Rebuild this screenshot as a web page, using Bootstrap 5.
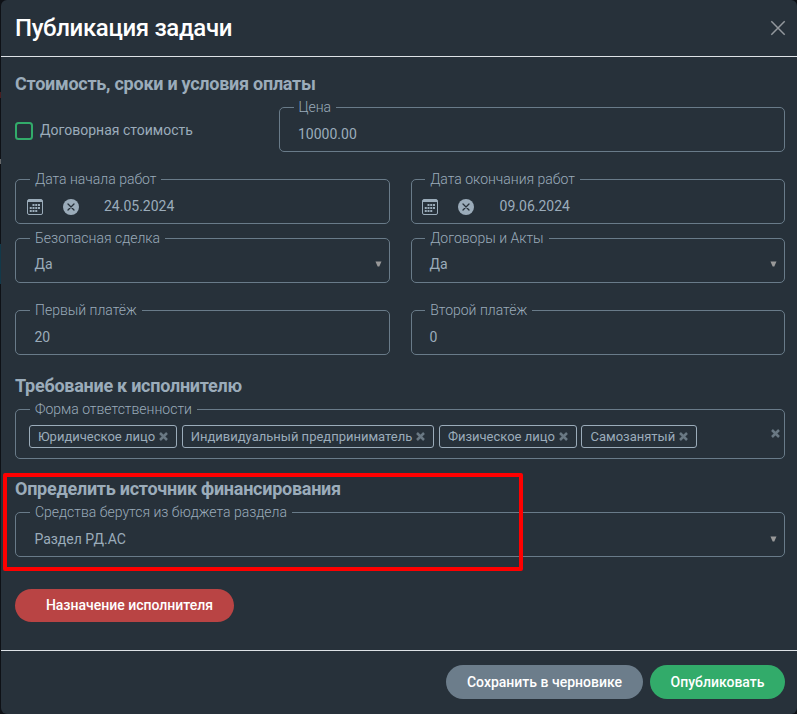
<!DOCTYPE html>
<html lang="ru">
<head>
<meta charset="utf-8">
<meta name="viewport" content="width=device-width, initial-scale=1">
<title>Публикация задачи</title>
<link href="https://cdn.jsdelivr.net/npm/bootstrap@5.3.0/dist/css/bootstrap.min.css" rel="stylesheet">
<style>
body{height:714px;overflow:hidden;font-family:Roboto,"Liberation Sans",sans-serif;font-size:14px;line-height:20px;color:#9bacba;
 background:linear-gradient(#0e1116 92px,#4a1d20 92px 98px,#0e1116 98px 159px,#66686a 159px 164px,#0e1116 164px 244px,#12394a 244px 284px,#0e1116 284px)}
.task-dialog{height:714px;margin-left:1px;width:796px;background:#27313a;border:0;border-radius:6px;color:inherit}
.task-dialog .modal-header{height:57px;padding:0 11px 0 14px;border-bottom:1px solid #dee2e6;border-radius:0}
.task-dialog .modal-title{font-size:24px;line-height:30px;font-weight:500;letter-spacing:-.36px;color:#fff}
.task-dialog .modal-body{padding:16px 12px 0 14px}
.task-dialog .modal-footer{height:64px;padding:0 12px 2px;border-top:1px solid #dee2e6;gap:7px}
.task-dialog .modal-footer>*{margin:0}
.close-btn{width:16px;height:16px;line-height:0;color:#93989d}
.sect{font-size:18px;line-height:22px;font-weight:700;letter-spacing:-.26px;margin:0}
.sect-req{margin:20px 0 12px}
.sect-fin{margin:19px 0 12px}
.field{height:45px;border:1px solid #697b89;border-radius:5px;min-width:0;padding-right:7px}
.field-chips{height:50px;padding-right:4px}
.field-label{align-self:flex-start;height:20px;margin:-11px 0 0 14px;padding:0 5px;background:#27313a;font-weight:300;white-space:nowrap}
.field-value{padding:7px 0 0 18.400px}
.field-price .field-value{padding-left:18px}
.field-price .field-label{margin-left:13.500px}
.two-col{display:grid;grid-template-columns:375px 374.400px;column-gap:20.600px}
.two-col>:last-child .field-label{margin-left:13.600px}
.two-col>:last-child .field-value{padding-left:18px}
.gap-lg{margin-top:27px}
.gap-sm{margin-top:14px}
.gap-sm .field-value{padding-top:6px}
.price-row{display:grid;grid-template-columns:264px 1fr;margin-top:12px}
.check-row{gap:7px;padding-top:1px}
.check{width:18px;height:18px;margin:2px 0 0;border:2px solid #32ab6a;border-radius:4px;background:transparent}
.arrow{width:7px;height:6px;margin-top:6px}
.dates{padding:7px 0 0 11px}
.date-ico{display:block;width:16px;height:16px;margin-top:1px}
.date-ico+.date-ico{margin:1px 25px 0 20px}
.two-col>:last-child .dates{padding-left:10px}
.two-col>:last-child .date-ico+.date-ico{margin-right:26px}
.chips{gap:4.600px;padding:6px 0 0 13px}
.chip{height:23px;border:1px solid #9bacba;border-radius:3px;padding:0 8px;font-size:13px;line-height:21px;gap:4px;white-space:nowrap}
.chip:nth-child(4){padding-right:7.500px}
.btn-task{display:flex;align-items:center;justify-content:center;border:0;border-radius:17px;padding:0;font-size:14px;font-weight:500;color:#fff}
.btn-assign{width:219px;height:33px;margin-top:32px;padding-left:10px;background:#b94444}
.btn-draft{width:197px;height:34px;padding-top:2px;background:#6c7d8b}
.btn-publish{width:135px;height:34px;padding-top:2px;background:#32ab6a}
.highlight{position:absolute;left:2px;top:473px;width:520px;height:98px;border:4px solid #f00;border-radius:2px;pointer-events:none}
</style>
<script src="https://cdn.jsdelivr.net/npm/bootstrap@5.3.0/dist/js/bootstrap.bundle.min.js"></script>
</head>
<body>
<svg class="d-none">
 <symbol id="cal" viewBox="0 0 16 16"><path fill="none" stroke="#9bacba" d="M.5 2A1.500 1.500 0 0 1 2 .5h12A1.500 1.500 0 0 1 15.500 2v12a1.500 1.500 0 0 1-1.500 1.500H2A1.500 1.500 0 0 1 .5 14z"/><path fill="#9bacba" d="M1 1h14v2H1z"/><path stroke="#9bacba" stroke-width="2" stroke-dasharray="2 .75" d="M5.500 6h8M2.750 9h10.750M2.750 12h7.500"/></symbol>
 <symbol id="clear" viewBox="0 0 16 16"><circle cx="8" cy="8" r="8" fill="#9bacba"/><path stroke="#27313a" stroke-width="1.300" stroke-linecap="round" d="m5 5 6 6m0-6-6 6"/></symbol>
 <symbol id="tri" viewBox="0 0 7 6"><path fill="#999" d="M.5.5h6l-2.200 5H2.700z"/></symbol>
 <symbol id="cross" viewBox="0 0 9 9"><path stroke="#697883" stroke-width="2.500" d="m1 1 7 7m0-7-7 7"/></symbol>
</svg>
<div class="task-dialog modal-content position-relative">
 <div class="modal-header d-flex align-items-center justify-content-between">
  <h1 class="modal-title">Публикация задачи</h1>
  <button class="close-btn btn p-0 border-0" aria-label="Закрыть"><svg width="16" height="16" viewBox="0 0 16 16"><path stroke="currentColor" stroke-width="1.500" d="m1.300 1.300 13.400 13.400m0-13.400L1.300 14.700"/></svg></button>
 </div>
 <div class="modal-body flex-grow-1">
  <h2 class="sect">Стоимость, сроки и условия оплаты</h2>
  <div class="price-row">
   <label class="check-row d-flex align-items-center"><input type="checkbox" class="check form-check-input"><span>Договорная стоимость</span></label>
   <div class="field field-price d-flex flex-column"><span class="field-label">Цена</span><span class="field-value">10000.00</span></div>
  </div>
  <div class="two-col gap-lg">
   <div class="field d-flex flex-column"><span class="field-label">Дата начала работ</span>
    <div class="d-flex align-items-center dates"><svg class="date-ico"><use href="#cal"/></svg><svg class="date-ico"><use href="#clear"/></svg><span>24.05.2024</span></div></div>
   <div class="field d-flex flex-column"><span class="field-label">Дата окончания работ</span>
    <div class="d-flex align-items-center dates"><svg class="date-ico"><use href="#cal"/></svg><svg class="date-ico"><use href="#clear"/></svg><span>09.06.2024</span></div></div>
  </div>
  <div class="two-col gap-sm">
   <div class="field d-flex flex-column"><span class="field-label">Безопасная сделка</span><div class="d-flex justify-content-between align-items-center"><span class="field-value">Да</span><svg class="arrow"><use href="#tri"/></svg></div></div>
   <div class="field d-flex flex-column"><span class="field-label">Договоры и Акты</span><div class="d-flex justify-content-between align-items-center"><span class="field-value">Да</span><svg class="arrow"><use href="#tri"/></svg></div></div>
  </div>
  <div class="two-col gap-lg">
   <div class="field d-flex flex-column"><span class="field-label">Первый платёж</span><span class="field-value">20</span></div>
   <div class="field d-flex flex-column"><span class="field-label">Второй платёж</span><span class="field-value">0</span></div>
  </div>
  <h2 class="sect sect-req">Требование к исполнителю</h2>
  <div class="field field-chips d-flex flex-column"><span class="field-label">Форма ответственности</span>
   <div class="chips d-flex align-items-start">
    <span class="chip d-flex align-items-center">Юридическое лицо <svg width="9" height="9"><use href="#cross"/></svg></span>
    <span class="chip d-flex align-items-center">Индивидуальный предприниматель <svg width="9" height="9"><use href="#cross"/></svg></span>
    <span class="chip d-flex align-items-center">Физическое лицо <svg width="9" height="9"><use href="#cross"/></svg></span>
    <span class="chip d-flex align-items-center">Самозанятый <svg width="9" height="9"><use href="#cross"/></svg></span>
    <svg class="ms-auto mt-1" width="9" height="9"><use href="#cross"/></svg>
   </div></div>
  <h2 class="sect sect-fin">Определить источник финансирования</h2>
  <div class="field d-flex flex-column"><span class="field-label">Средства берутся из бюджета раздела</span><div class="d-flex justify-content-between align-items-center"><span class="field-value">Раздел РД.АС</span><svg class="arrow"><use href="#tri"/></svg></div></div>
  <button class="btn btn-task btn-assign">Назначение исполнителя</button>
 </div>
 <div class="modal-footer d-flex align-items-center justify-content-end flex-nowrap">
  <button class="btn btn-task btn-draft">Сохранить в черновике</button>
  <button class="btn btn-task btn-publish">Опубликовать</button>
 </div>
 <div class="highlight"></div>
</div>
</body>
</html>
